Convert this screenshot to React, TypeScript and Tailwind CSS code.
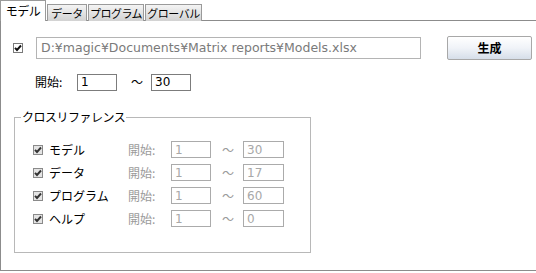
import React from "react";

const font = { fontFamily: '"Noto Sans CJK JP", "Liberation Sans", sans-serif' };
const latin = { fontFamily: '"DejaVu Sans", "Noto Sans CJK JP", sans-serif' };

function Check({ dim }: { dim?: boolean }) {
  return (
    <span
      className={`flex h-[10px] w-[10px] items-center justify-center border ${
        dim ? "border-[#8a8a8a] bg-[#e4e4e4]" : "border-[#7a7a7a] bg-white"
      }`}
    >
      <svg width="8" height="8" viewBox="0 0 8 8">
        <path d="M1 3.8 L3 6 L7 1.5" fill="none" stroke={dim ? "#333" : "#111"} strokeWidth="1.9" />
      </svg>
    </span>
  );
}

function Tab({ label, active, w }: { label: string; active?: boolean; w: string }) {
  return active ? (
    <div className={`relative z-10 flex h-[21px] items-center justify-center border-t border-r border-l border-[#9a9a9a] bg-white text-[12px] tracking-[-0.5px] text-black ${w}`}>
      {label}
    </div>
  ) : (
    <div className={`ml-px flex h-[17px] items-center justify-center border-t border-r border-l border-[#9a9a9a] bg-gradient-to-b from-[#f4f4f4] to-[#d2d2d2] text-[11px] tracking-[-0.5px] text-black ${w}`}>
      {label}
    </div>
  );
}

const rows = [
  { name: "モデル", end: "30" },
  { name: "データ", end: "17" },
  { name: "プログラム", end: "60" },
  { name: "ヘルプ", end: "0" },
];

export default function App() {
  return (
    <div className="h-[273px] w-[536px] overflow-hidden bg-white" style={font}>
      {/* タブ */}
      <div className="flex h-[21px] items-end">
        <Tab label="モデル" active w="w-[46px]" />
        <Tab label="データ" w="w-[40px]" />
        <Tab label="プログラム" w="w-[56px]" />
        <Tab label="グローバル" w="w-[57px]" />
      </div>

      {/* 本体 */}
      <div className="-mt-px flex h-[251px] w-[560px] flex-col border border-[#8c8c8c] bg-white pl-[12px]">
        <div className="mt-[15px] flex items-center">
          <Check />
          <div
            className="ml-[13px] flex h-[22px] w-[385px] items-center border border-[#b4b4b4] px-[4px] text-[12.5px] text-[#7a7a7a]"
            style={latin}
          >
            D:¥magic¥Documents¥Matrix reports¥Models.xlsx
          </div>
          <button className="ml-[26px] h-[24px] w-[85px] rounded-[2px] border border-[#a8a8a8] bg-gradient-to-b from-white via-[#f0f3f8] to-[#d6dee9] text-[12px] font-bold text-black">
            生成
          </button>
        </div>

        <div className="mt-[13px] ml-[22px] flex items-center text-[12px] text-black">
          <span className="w-[42px]">開始:</span>
          <div className="flex h-[17px] w-[40px] items-center border border-[#7c7c7c] px-[3px]" style={latin}>1</div>
          <span className="ml-[14px] w-[20px]">〜</span>
          <div className="flex h-[17px] w-[40px] items-center border border-[#7c7c7c] px-[3px]" style={latin}>30</div>
        </div>

        {/* クロスリファレンス */}
        <div className="relative mt-[26px] ml-px h-[136px] w-[297px] border border-[#b8b8b8]">
          <span className="absolute -top-[9px] left-[6px] bg-white px-px text-[12px] leading-[16px] tracking-[-0.5px] text-black">
            クロスリファレンス
          </span>
          <div className="mt-[23px] ml-[18px] flex flex-col gap-[6px]">
            {rows.map((r) => (
              <div key={r.name} className="flex h-[17px] items-center text-[12px]">
                <Check dim />
                <span className="ml-[6px] w-[79px] text-black">{r.name}</span>
                <span className="w-[43px] text-[#9a9a9a]">開始:</span>
                <div className="flex h-[17px] w-[40px] items-center border border-[#ababab] px-[3px] text-[#a8a8a8]" style={latin}>1</div>
                <span className="ml-[11px] w-[21px] text-[#9a9a9a]">〜</span>
                <div className="flex h-[17px] w-[41px] items-center border border-[#ababab] px-[3px] text-[#a8a8a8]" style={latin}>
                  {r.end}
                </div>
              </div>
            ))}
          </div>
        </div>
      </div>
    </div>
  );
}
